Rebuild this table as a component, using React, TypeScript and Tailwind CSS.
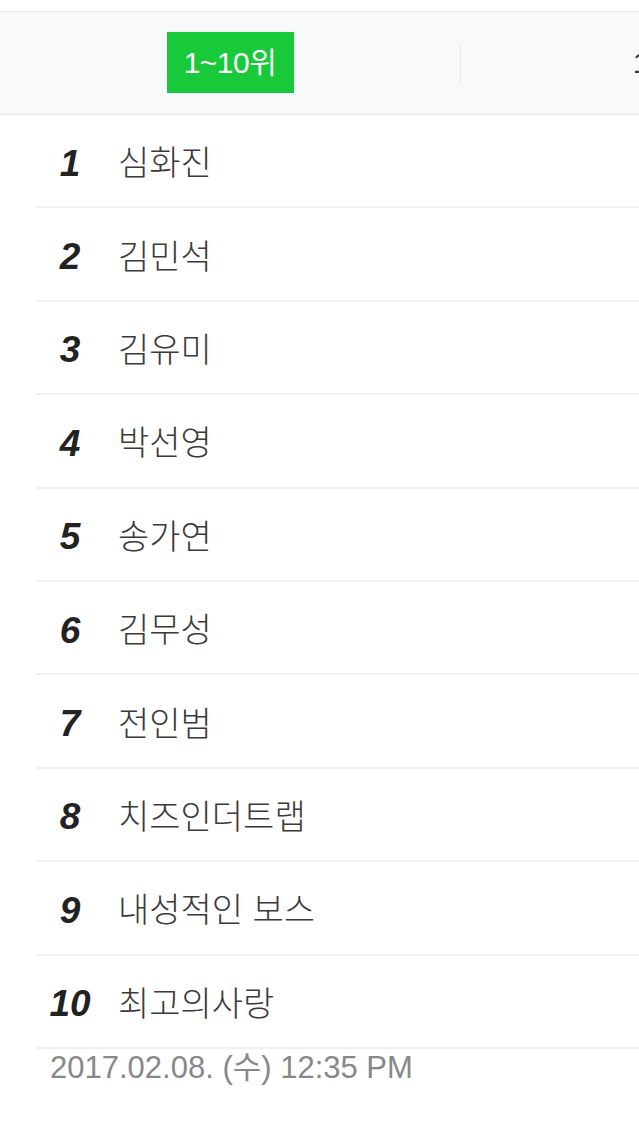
const RANKS = [
  '심화진',
  '김민석',
  '김유미',
  '박선영',
  '송가연',
  '김무성',
  '전인범',
  '치즈인더트랩',
  '내성적인 보스',
  '최고의사랑',
]

const FONT = "font-['Liberation_Sans','Noto_Sans_CJK_KR',sans-serif]"

export default function App() {
  return (
    <div className={`w-[639px] h-[1138px] overflow-hidden bg-white ${FONT}`}>
      <div className="h-[11px]" />

      {/* tabs */}
      <div className="flex w-[922px] h-[104px] bg-[#f8f9fb] border-t border-[#e8eaed] border-b-2 border-b-[#eceef0]">
        <div className="w-[460px] flex items-center justify-center">
          <span className="w-[127px] h-[61px] flex items-center justify-center bg-[#18c93a] text-white text-[30px] leading-none tracking-[-0.5px]">
            1~10위
          </span>
        </div>
        <div className="w-px h-[40px] self-center bg-[#e6e8eb]" />
        <div className="w-[450px] flex items-center justify-center">
          <span className="text-[#333] text-[30px] leading-none tracking-[-0.5px]">
            11~20위
          </span>
        </div>
      </div>

      {/* ranking list */}
      <ol className="ml-[36px]">
        {RANKS.map((name, i) => (
          <li
            key={name}
            className="flex items-center h-[93.4px] pt-[5px] border-b-2 border-[#f1f1f1]"
          >
            <span className="w-[68px] text-center text-[37px] font-bold italic text-[#222] leading-none">
              {i + 1}
            </span>
            <span className="ml-[14px] text-[34px] font-light text-[#3a3a3a] leading-none">
              {name}
            </span>
          </li>
        ))}
      </ol>

      <p className="mt-[3px] ml-[50px] text-[31px] text-[#888] leading-none">
        2017.02.08. (수) 12:35 PM
      </p>
    </div>
  )
}
